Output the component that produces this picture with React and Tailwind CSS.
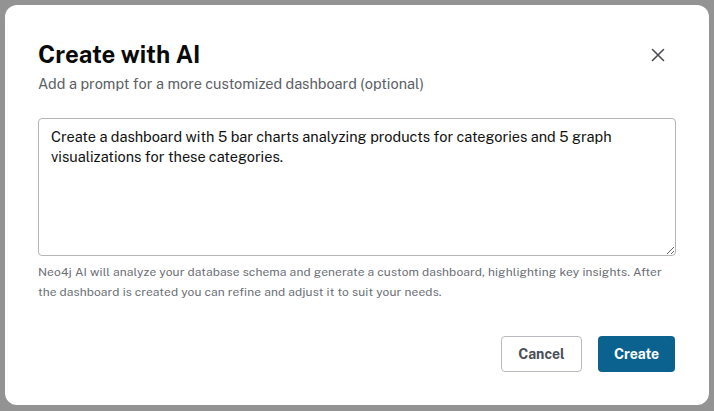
import React, { useState } from 'react';

const App = () => {
  const [prompt, setPrompt] = useState(
    'Create a dashboard with 5 bar charts analyzing products for categories and 5 graph visualizations for these categories.'
  );

  return (
    <div className="min-h-screen w-full bg-[#939393] p-[5px]" style={{ fontFamily: '"Public Sans", Inter, "Noto Sans", sans-serif' }}>
      <div className="flex h-[400px] w-[704px] flex-col rounded-[12px] bg-white px-[33px] pt-[33px]">
        <div className="flex items-start justify-between">
          <div>
            <h2 className="text-[24px] font-bold leading-[32px] text-[#0a0a0a]">Create with AI</h2>
            <p className="mt-[4px] text-[14.5px] leading-[20px] text-[#5b5f66]">
              Add a prompt for a more customized dashboard (optional)
            </p>
          </div>
          <button className="mr-[10px] mt-[9px] text-[#4a4d52]">
            <svg width="16" height="16" viewBox="0 0 16 16" fill="none" stroke="currentColor" strokeWidth="1.6" strokeLinecap="round">
              <path d="M2.5 2.5l11 11M13.5 2.5l-11 11" />
            </svg>
          </button>
        </div>

        <textarea
          value={prompt}
          onChange={(e) => setPrompt(e.target.value)}
          className="mt-[24px] h-[138px] w-[638px] resize-y rounded-[4px] border border-[#b5b5b5] px-[12px] py-[8px] text-[14.5px] leading-[20px] text-[#111] outline-none"
        />

        <p className="mt-[6px] text-[12px] leading-[20px] tracking-[0.12px] text-[#6b6f76]">
          Neo4j AI will analyze your database schema and generate a custom dashboard, highlighting key insights. After the dashboard is created you can refine and adjust it to suit your needs.
        </p>

        <div className="mt-[34px] flex justify-end gap-[16px] pr-[1px]">
          <button className="h-[36px] w-[81px] rounded-[4px] border border-[#b8bcc2] bg-white text-[14px] font-bold text-[#4a4f57]">
            Cancel
          </button>
          <button className="h-[36px] w-[77px] rounded-[4px] bg-[#0b628f] text-[14px] font-bold text-white">
            Create
          </button>
        </div>
      </div>
    </div>
  );
};

export default App;
